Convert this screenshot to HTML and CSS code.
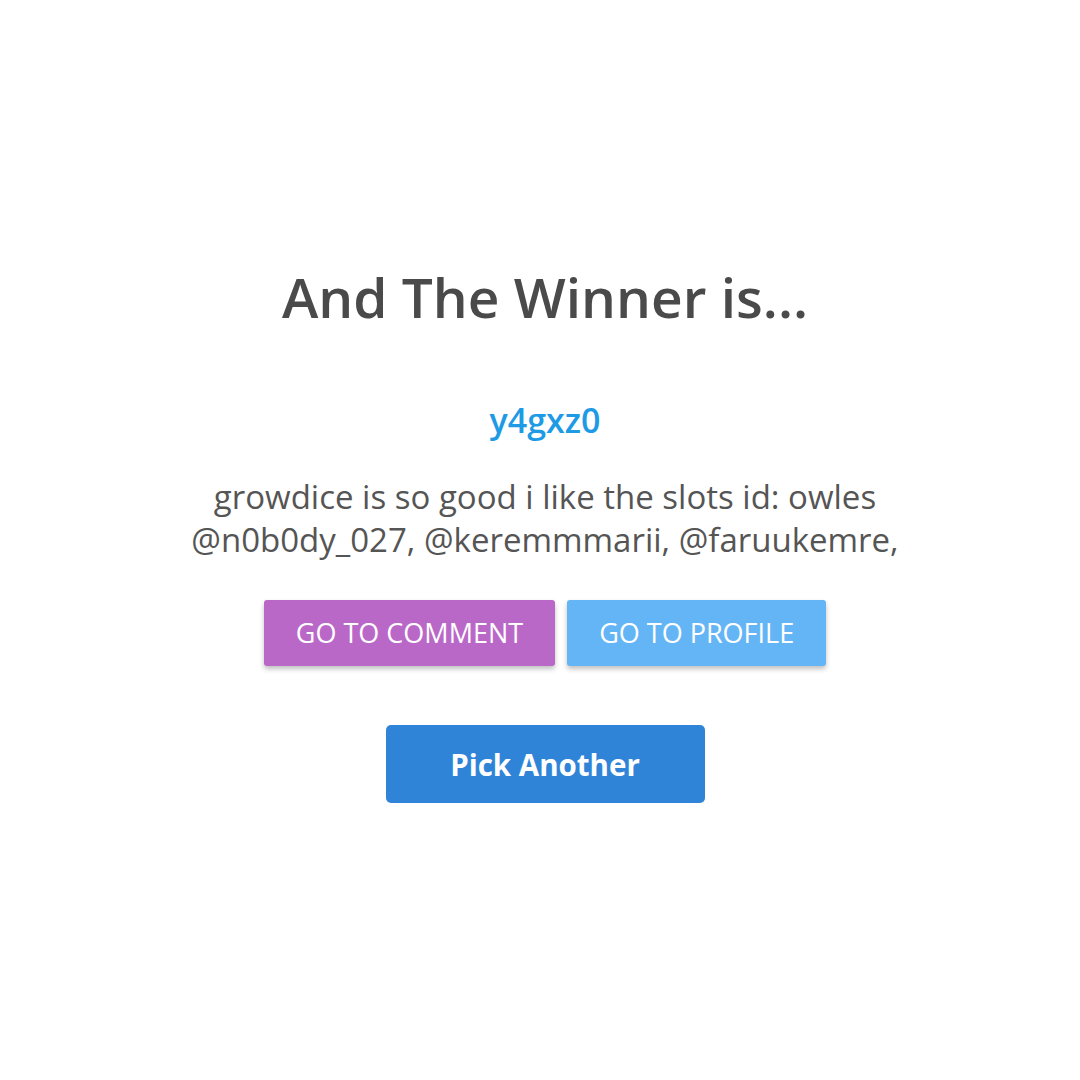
FILE: index.html
```html
<!DOCTYPE html>
<html lang="en">
<head>
  <meta charset="UTF-8">
  <meta name="viewport" content="width=device-width, initial-scale=1.0">
  <title>Giveaway Winner</title>
  <link rel="stylesheet" href="styles.css">
</head>
<body>
  <div class="winner">
    <h1>And The Winner is...</h1>
    <a class="username" href="#">y4gxz0</a>
    <p class="comment">growdice is so good i like the slots id: owles<br>@n0b0dy_027, @keremmmarii, @faruukemre,</p>
    <div class="links">
      <a class="btn btn-comment" href="#">Go to comment</a>
      <a class="btn btn-profile" href="#">Go to profile</a>
    </div>
    <button class="pick">Pick Another</button>
  </div>
</body>
</html>
```

FILE: styles.css
```css
body {
  margin: 0;
  background: #fff;
  font-family: "Open Sans", "Noto Sans", sans-serif;
  color: #555;
}

.winner {
  display: flex;
  flex-direction: column;
  align-items: center;
  padding: 262px 0 0 10px;
  text-align: center;
}

h1 {
  margin: 0;
  font-size: 55px;
  font-weight: 600;
  line-height: 70px;
  color: #4a4a4a;
}

.username {
  margin-top: 66px;
  font-size: 34px;
  font-weight: 600;
  line-height: 44px;
  color: #1e9be4;
  text-decoration: none;
}

.comment {
  margin: 33px 0 0;
  font-size: 33px;
  line-height: 43px;
  color: #555;
}

.links {
  display: flex;
  gap: 12px;
  margin-top: 39px;
}

.btn {
  display: block;
  padding: 0 32px;
  height: 66px;
  line-height: 66px;
  border-radius: 3px;
  font-size: 27px;
  text-transform: uppercase;
  color: #fff;
  text-decoration: none;
  box-shadow: 0 3px 5px rgba(0, 0, 0, 0.25);
}

.btn-comment {
  background: #ba68c8;
}

.btn-profile {
  background: #64b5f6;
}

.pick {
  margin-top: 59px;
  width: 319px;
  height: 78px;
  border: none;
  border-radius: 5px;
  background: #2f84d8;
  color: #fff;
  font-family: inherit;
  font-size: 29.5px;
  font-weight: 700;
  cursor: pointer;
}
```
